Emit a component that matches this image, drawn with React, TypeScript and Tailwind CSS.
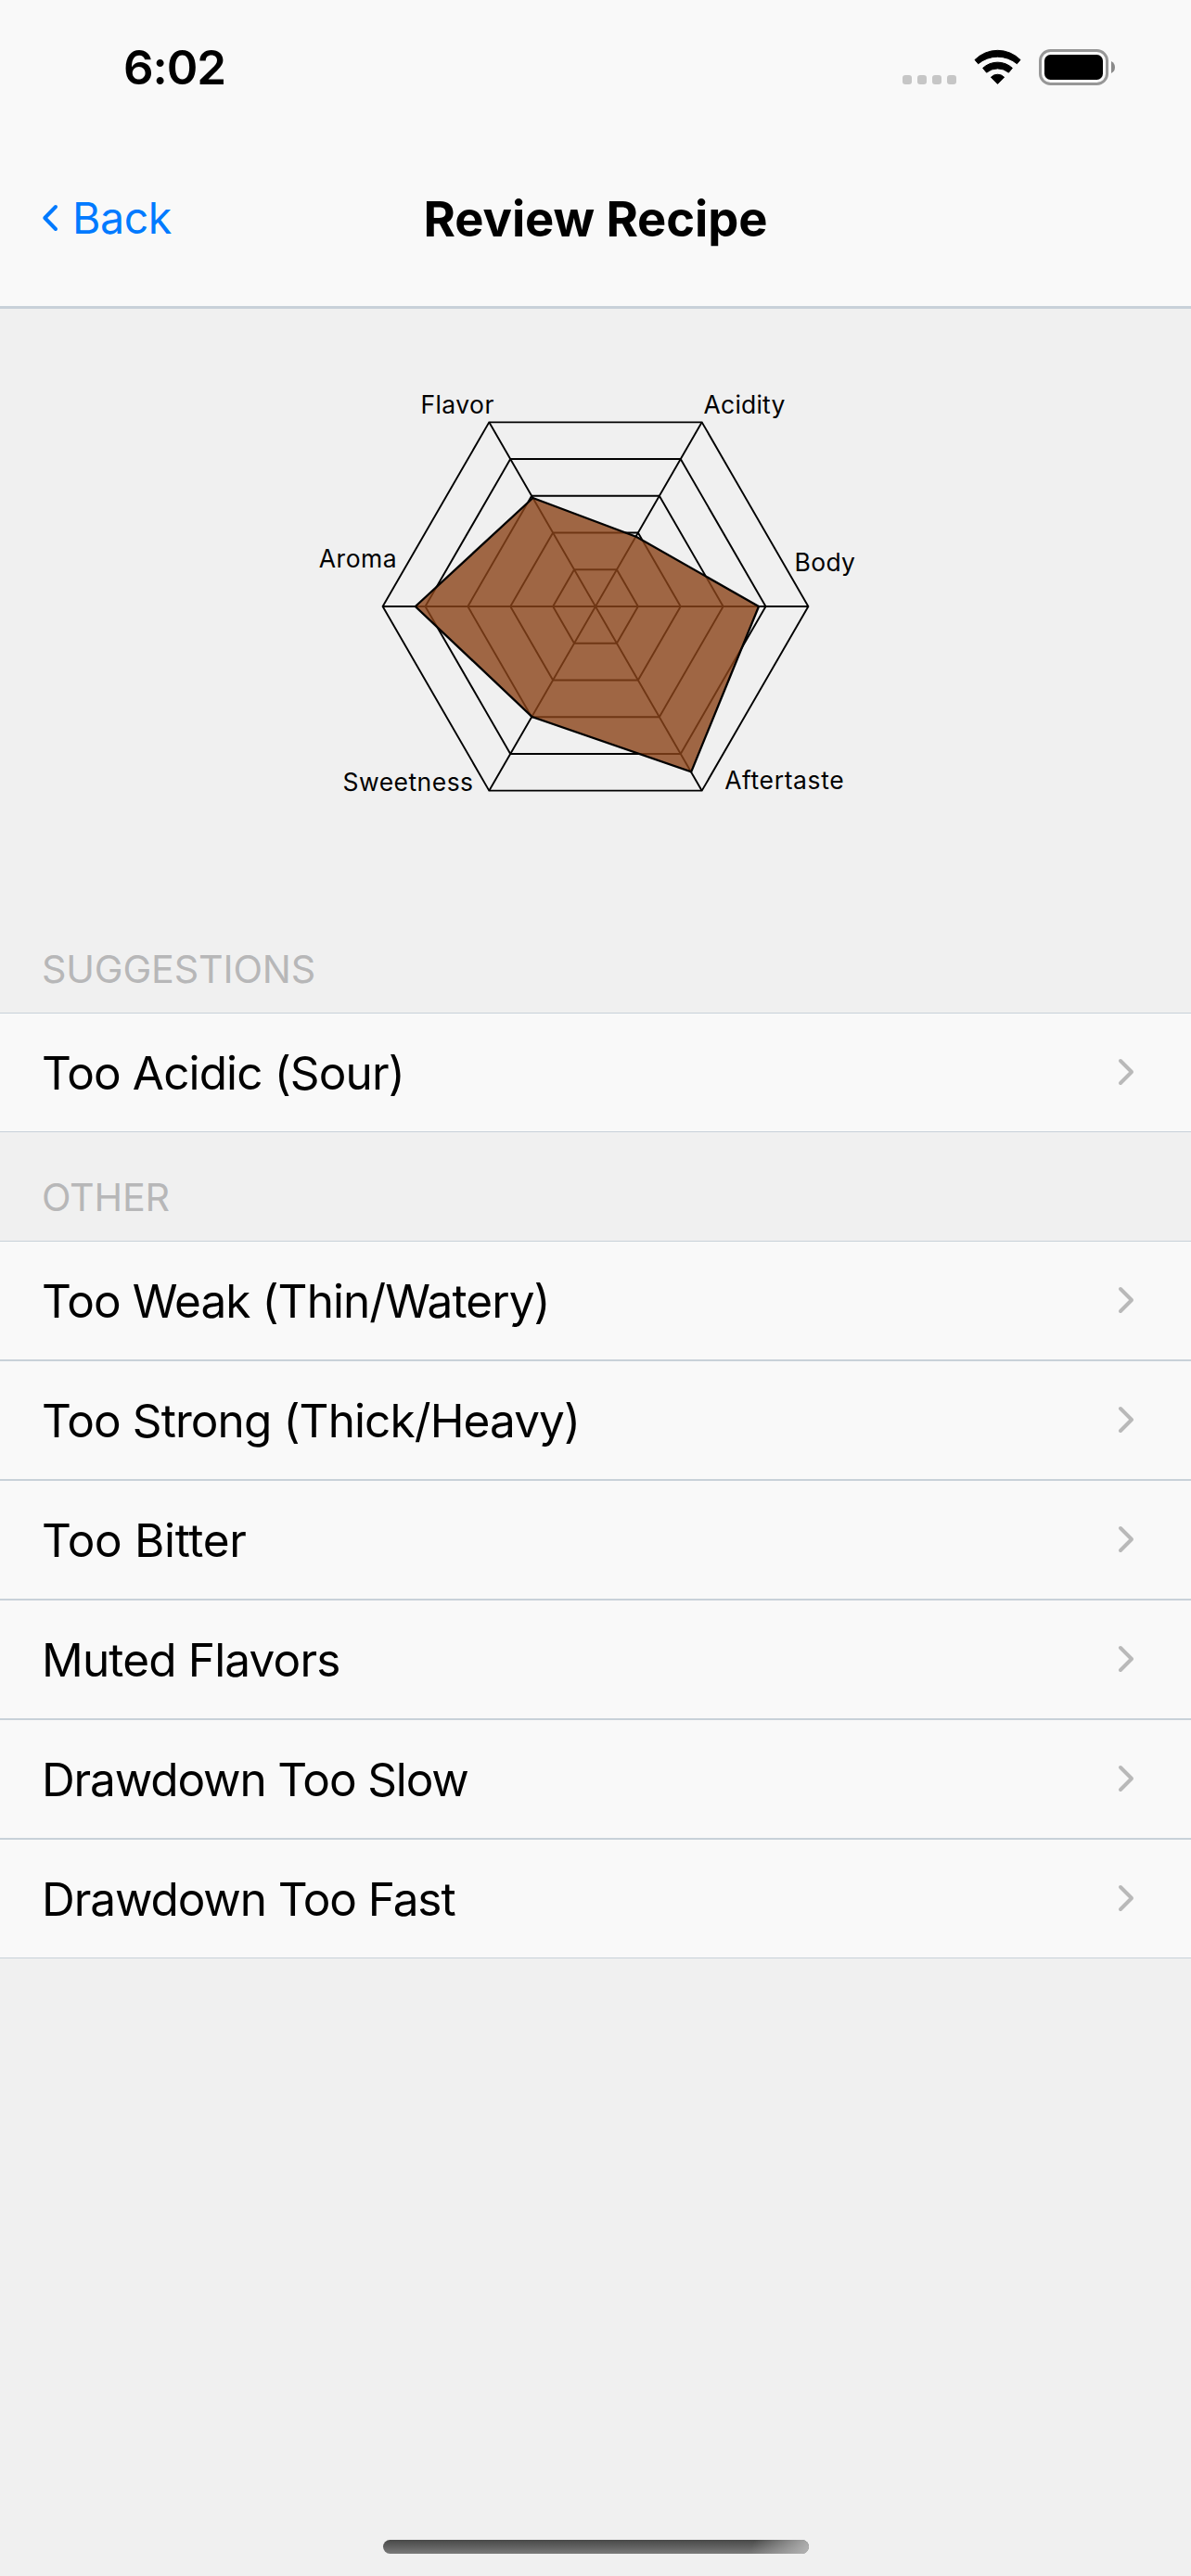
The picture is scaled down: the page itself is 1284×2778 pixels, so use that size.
type Item = { label: string; tracking: string };

const suggestions: Item[] = [{ label: "Too Acidic (Sour)", tracking: "tracking-[-0.875px]" }];

const others: Item[] = [
  { label: "Too Weak (Thin/Watery)", tracking: "tracking-[-0.93px]" },
  { label: "Too Strong (Thick/Heavy)", tracking: "tracking-[-0.9px]" },
  { label: "Too Bitter", tracking: "tracking-[-0.35px]" },
  { label: "Muted Flavors", tracking: "tracking-[-0.837px]" },
  { label: "Drawdown Too Slow", tracking: "tracking-[-1.13px]" },
  { label: "Drawdown Too Fast", tracking: "tracking-[-1.09px]" },
];

function StatusIcons() {
  return (
    <svg width="232" height="42" viewBox="0 0 232 42" aria-hidden="true">
      {[1, 17, 33, 49].map((x) => (
        <rect key={x} x={x} y="29" width="10" height="10" rx="3" fill="#c6c6c6" />
      ))}
      <g fill="#000" stroke="#000" strokeWidth="1" strokeLinejoin="round">
        <path d="M79 12.5A34.6 34.6 0 0 1 128 12.5L124.4 16.8A32.5 32.5 0 0 0 82.6 16.8Z" />
        <path d="M87.6 21.4A23.4 23.4 0 0 1 119.4 21.4L115.4 26.2A18.6 18.6 0 0 0 91.6 26.2Z" />
        <path d="M96.4 31.2A10 10 0 0 1 110.6 31.2L103.5 38.4Z" />
      </g>
      <rect x="149.5" y="2.5" width="72" height="36" rx="11" fill="none" stroke="#979797" strokeWidth="3" />
      <rect x="154" y="7" width="63" height="27" rx="6.5" fill="#000" />
      <path d="M226 14Q230 16 230 20.5T226 27Z" fill="#8a8a8a" />
    </svg>
  );
}

const CX = 642;
const CY = 654;
const R = 229.4;

function hexagon(r: number) {
  return [0, 60, 120, 180, 240, 300]
    .map((a) => {
      const t = (a * Math.PI) / 180;
      return `${(CX + r * Math.cos(t)).toFixed(2)},${(CY + r * Math.sin(t)).toFixed(2)}`;
    })
    .join(" ");
}

const axes = [
  { label: "Flavor", x: 453.4, y: 446, spacing: 0.436 },
  { label: "Acidity", x: 758.6, y: 446, spacing: 0.2 },
  { label: "Aroma", x: 343.8, y: 612, spacing: 0.517 },
  { label: "Body", x: 856.6, y: 616, spacing: 0.3 },
  { label: "Sweetness", x: 369.5, y: 852.6, spacing: 0.464 },
  { label: "Aftertaste", x: 781.2, y: 851.4, spacing: 0.61 },
];

function RadarChart() {
  return (
    <svg width="684" height="500" viewBox="300 400 684 500">
      <g fill="none" stroke="#000" strokeWidth="1.9">
        {[1, 2, 3, 4, 5].map((n) => (
          <polygon key={n} points={hexagon((R * n) / 5)} />
        ))}
        <path d="M412.6 654H871.4M527.3 455.3L756.7 852.7M756.7 455.3L527.3 852.7" />
      </g>
      <polygon
        points="447.8,654 574.5,537 686.3,579 818,654 745.2,832.4 573.6,773"
        fill="#8b4419"
        fillOpacity="0.8"
        stroke="#000"
        strokeWidth="2.3"
      />
      {axes.map((a) => (
        <text key={a.label} x={a.x} y={a.y} fontSize="26.5" letterSpacing={a.spacing} fill="#000">
          {a.label}
        </text>
      ))}
    </svg>
  );
}

function SectionHeader({ label, tracking }: Item) {
  return (
    <h2
      className={`flex h-[117px] items-end pb-[22px] pl-[45px] text-[41.25px] leading-[50px] text-[#b7b7b8] ${tracking}`}
    >
      {label}
    </h2>
  );
}

function Row({ label, tracking }: Item) {
  return (
    <li className="flex h-[129px] items-center justify-between border-y border-[#c8d1d9] bg-[#f9f9f9] pr-[61px] pl-[45px]">
      <span className={`pt-0.5 text-[49.5px] leading-[61px] ${tracking}`}>{label}</span>
      <svg width="18" height="31" viewBox="0 0 18 31" fill="none" aria-hidden="true">
        <path d="M3 3L15 15L3 27" stroke="#b9b9b9" strokeWidth="4" strokeLinecap="round" strokeLinejoin="round" />
      </svg>
    </li>
  );
}

export default function App() {
  return (
    <div className="flex h-[2778px] w-[1284px] flex-col bg-[#f0f0f0] font-['Inter',sans-serif] text-black">
      <header className="border-b-[3px] border-[#c8d1d9] bg-[#f9f9f9]">
        <div className="flex h-[141px] items-center justify-between pt-[4px] pr-20 pl-[133px]">
          <span className="text-[51px] leading-[61px] font-semibold tracking-[-1.079px]">6:02</span>
          <StatusIcons />
        </div>
        <div className="grid h-[189px] grid-cols-[1fr_auto_1fr] items-center">
          <button className="flex items-center gap-[14px] pb-0.5 pl-[45px] text-left text-[#007aff]">
            <svg width="19" height="32" viewBox="0 0 19 32" fill="none" aria-hidden="true">
              <path d="M15 4L3.3 16L15 28" stroke="currentColor" strokeWidth="4" strokeLinecap="round" strokeLinejoin="round" />
            </svg>
            <span className="text-[46.5px] leading-[56px] tracking-[-0.45px]">Back</span>
          </button>
          <h1 className="text-[52.5px] leading-[64px] font-bold tracking-[-0.1px]">Review Recipe</h1>
        </div>
      </header>
      <main>
        <div className="flex h-[642px] justify-center pt-[67px]">
          <RadarChart />
        </div>
        <SectionHeader label="SUGGESTIONS" tracking="tracking-[-0.162px]" />
        <ul>
          {suggestions.map((s) => (
            <Row key={s.label} {...s} />
          ))}
        </ul>
        <SectionHeader label="OTHER" tracking="tracking-[-0.2px]" />
        <ul>
          {others.map((s) => (
            <Row key={s.label} {...s} />
          ))}
        </ul>
      </main>
      <footer className="mt-auto flex justify-center pb-6">
        <div className="h-[15px] w-[459px] overflow-hidden rounded-full bg-linear-to-b from-[#484948] to-[#7a7a7a]">
          <div className="ml-auto h-full w-[70px] bg-[linear-gradient(115deg,transparent_15%,#b4b4b4_100%)]" />
        </div>
      </footer>
    </div>
  );
}
